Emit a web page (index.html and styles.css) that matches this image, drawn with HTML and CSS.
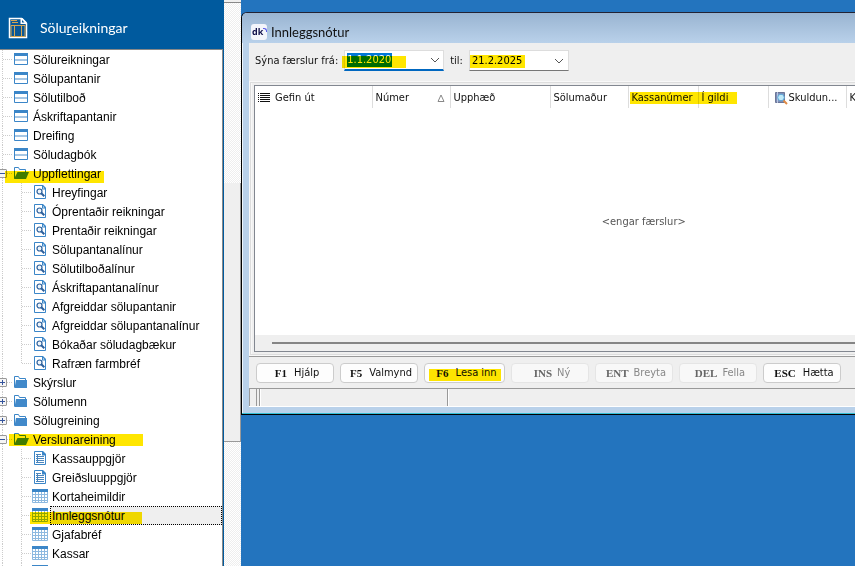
FILE: index.html
```html
<!DOCTYPE html>
<html lang="is">
<head>
<meta charset="utf-8">
<title>Innleggsnótur</title>
<link rel="stylesheet" href="styles.css">
</head>
<body>
<svg class="defs" aria-hidden="true">
  <symbol id="form" viewBox="0 0 16 16"><path fill="#fff" stroke="#3b86c8" d="M1.500 2.500h13v11h-13z"/><path fill="#3b86c8" d="M1 2h14v3H1z"/><path fill="#a5c6e4" d="M2 8h12v2H2z"/></symbol>
  <symbol id="open" viewBox="0 0 16 16"><path fill="#fff" stroke="#3b86c8" d="M1.500 13.500v-11h4l1 2h6v3"/><path fill="#4189ca" d="M4.500 7H16l-3 7H1z"/></symbol>
  <symbol id="folder" viewBox="0 0 16 16"><path fill="#fff" stroke="#3b86c8" d="M1.500 13.500v-11h4l1 2h6v3"/><path fill="#4189ca" d="M3 6h11v8H1.500z"/></symbol>
  <symbol id="lookup" viewBox="0 0 16 16"><path fill="#fff" stroke="#3b86c8" d="M2.500 1.500h8l3 3v10h-11z"/><path fill="#3b86c8" d="M10 1h1l3 3v1.500h-4z"/><path fill="#fff" d="M11 3l1.500 1.500H11z"/><circle cx="7.500" cy="7.500" r="2.500" fill="#eef5fb" stroke="#2b5f9c" stroke-width="1.200"/><path stroke="#2b5f9c" stroke-width="2" d="M9.300 9.300l3 3"/></symbol>
  <symbol id="doc" viewBox="0 0 16 16"><path fill="#fff" stroke="#3b86c8" d="M2.500 1.500h8l3 3v10h-11z"/><path fill="#3b86c8" d="M10 1h1l3 3v1.500h-4z"/><path fill="none" stroke="#4b86bd" d="M4 4.500h5M4 6.500h8M4 8.500h8M4 10.500h8M4 12.500h8M5.500 4v9"/></symbol>
  <symbol id="grid" viewBox="0 0 16 16"><path fill="#fff" stroke="#8db9e0" d="M.5 1.500h15v13H.5z"/><path fill="#3b86c8" d="M0 1h16v3H0z"/><path fill="none" stroke="#8db9e0" d="M3.500 4v10M6.500 4v10M9.500 4v10M12.500 4v10M1 6.500h14M1 9.500h14M1 12.500h14"/></symbol>
  <symbol id="chevron" viewBox="0 0 10 6"><path fill="none" stroke="#555" d="M1 1l4 4 4-4"/></symbol>
</svg>

<aside class="sidebar">
  <header class="module">
    <svg class="module-icon" viewBox="0 0 20 24" aria-hidden="true"><path fill="#0a5795" stroke="#fff" stroke-width="1.500" d="M1.500 2.500h12l5 5v14h-17z"/><path fill="#fff" d="M12.500 2h2l4.500 4.500V8h-6.500z"/><path fill="#0a5795" d="M14 4l2.500 2.500H14z"/><path fill="none" stroke="#d3a552" d="M3 4.500h6M4 6.500h6M3 9.500h14v11H3zM6.500 9v12M13.500 9v12"/></svg>
    <h1>Sölu<u>r</u>eikningar</h1>
  </header>
  <nav class="tree">
    <ul>
      <li><a class="row" href="#"><svg><use href="#form"/></svg><span>Sölureikningar</span></a></li>
      <li><a class="row" href="#"><svg><use href="#form"/></svg><span>Sölupantanir</span></a></li>
      <li><a class="row" href="#"><svg><use href="#form"/></svg><span>Sölutilboð</span></a></li>
      <li><a class="row" href="#"><svg><use href="#form"/></svg><span>Áskriftapantanir</span></a></li>
      <li><a class="row" href="#"><svg><use href="#form"/></svg><span>Dreifing</span></a></li>
      <li><a class="row" href="#"><svg><use href="#form"/></svg><span>Söludagbók</span></a></li>
      <li><a class="row branch expanded marked mark-lookups" href="#"><svg><use href="#open"/></svg><span>Uppflettingar</span></a>
        <ul>
          <li><a class="row" href="#"><svg><use href="#lookup"/></svg><span>Hreyfingar</span></a></li>
          <li><a class="row" href="#"><svg><use href="#lookup"/></svg><span>Óprentaðir reikningar</span></a></li>
          <li><a class="row" href="#"><svg><use href="#lookup"/></svg><span>Prentaðir reikningar</span></a></li>
          <li><a class="row" href="#"><svg><use href="#lookup"/></svg><span>Sölupantanalínur</span></a></li>
          <li><a class="row" href="#"><svg><use href="#lookup"/></svg><span>Sölutilboðalínur</span></a></li>
          <li><a class="row" href="#"><svg><use href="#lookup"/></svg><span>Áskriftapantanalínur</span></a></li>
          <li><a class="row" href="#"><svg><use href="#lookup"/></svg><span>Afgreiddar sölupantanir</span></a></li>
          <li><a class="row" href="#"><svg><use href="#lookup"/></svg><span>Afgreiddar sölupantanalínur</span></a></li>
          <li><a class="row" href="#"><svg><use href="#lookup"/></svg><span>Bókaðar söludagbækur</span></a></li>
          <li><a class="row last" href="#"><svg><use href="#lookup"/></svg><span>Rafræn farmbréf</span></a></li>
        </ul>
      </li>
      <li><a class="row branch" href="#"><svg><use href="#folder"/></svg><span>Skýrslur</span></a></li>
      <li><a class="row branch" href="#"><svg><use href="#folder"/></svg><span>Sölumenn</span></a></li>
      <li><a class="row branch" href="#"><svg><use href="#folder"/></svg><span>Sölugreining</span></a></li>
      <li><a class="row branch expanded marked mark-shop" href="#"><svg><use href="#open"/></svg><span>Verslunareining</span></a>
        <ul>
          <li><a class="row" href="#"><svg><use href="#doc"/></svg><span>Kassauppgjör</span></a></li>
          <li><a class="row" href="#"><svg><use href="#doc"/></svg><span>Greiðsluuppgjör</span></a></li>
          <li><a class="row" href="#"><svg><use href="#grid"/></svg><span>Kortaheimildir</span></a></li>
          <li><a class="row selected marked mark-credit" href="#"><svg><use href="#grid"/></svg><span>Innleggsnótur</span></a></li>
          <li><a class="row" href="#"><svg><use href="#grid"/></svg><span>Gjafabréf</span></a></li>
          <li><a class="row" href="#"><svg><use href="#grid"/></svg><span>Kassar</span></a></li>
          <li><a class="row" href="#"><svg><use href="#grid"/></svg><span></span></a></li>
        </ul>
      </li>
    </ul>
  </nav>
</aside>
<div class="scrollbar"><div class="scroll-cap"></div><div class="scroll-thumb"></div></div>

<main class="desktop">
  <section class="window">
    <header class="titlebar"><span class="logo">dk<i></i></span><h2>Innleggsnótur</h2></header>
    <div class="client">
      <form class="filters">
        <label for="from">Sýna færslur frá:</label>
        <div class="combo focused marked mark-from"><input id="from" type="text" value="1.1.2020"><button type="button" aria-label="Velja"><svg><use href="#chevron"/></svg></button></div>
        <label for="to">til:</label>
        <div class="combo marked mark-to"><input id="to" type="text" value="21.2.2025"><button type="button" aria-label="Velja"><svg><use href="#chevron"/></svg></button></div>
      </form>
      <div class="list-frame">
        <div class="list">
          <table>
            <colgroup><col class="c-menu"><col class="c-issued"><col class="c-num"><col class="c-wide"><col class="c-num"><col class="c-mid"><col class="c-mid"><col class="c-num"><col></colgroup>
            <thead><tr>
              <th class="menu"><svg viewBox="0 0 12 10" aria-hidden="true"><path stroke="#111" d="M0 .5h1M2 .5h10M0 2.500h1M2 2.500h10M0 4.500h1M2 4.500h10M0 6.500h1M2 6.500h10M0 8.500h1M2 8.500h10"/></svg></th>
              <th>Gefin út</th>
              <th><div class="sorted">Númer<svg viewBox="0 0 8 8" aria-hidden="true"><path fill="none" stroke="#888" d="M4 1l3 6.500H1z"/></svg></div></th>
              <th>Upphæð</th>
              <th>Sölumaður</th>
              <th><div class="marked mark-columns">Kassanúmer</div></th>
              <th>Í gildi</th>
              <th><div class="with-icon"><svg viewBox="0 0 14 14" aria-hidden="true"><path fill="#7f8db5" stroke="#6b7697" d="M1.500 1.500h9v10h-9z"/><path fill="#b9c6e0" d="M3 1h1v11H3z"/><circle cx="7" cy="6.500" r="3.300" fill="#bfeaf8" stroke="#5aa5d8"/><path stroke="#e08b45" stroke-width="2" d="M9.500 9.500l3.500 3.500"/></svg>Skuldun...</div></th>
              <th>K</th>
            </tr></thead>
            <tbody><tr><td colspan="9">&lt;engar færslur&gt;</td></tr></tbody>
          </table>
          <div class="hscroll"></div>
        </div>
      </div>
      <div class="actions">
        <button type="button"><b>F1</b>Hjálp</button>
        <button type="button"><b>F5</b>Valmynd</button>
        <button type="button" class="load marked mark-load"><b>F6</b>Lesa inn</button>
        <button type="button" disabled><b>INS</b>Ný</button>
        <button type="button" disabled><b>ENT</b>Breyta</button>
        <button type="button" disabled><b>DEL</b>Fella</button>
        <button type="button"><b>ESC</b>Hætta</button>
      </div>
      <footer class="status"><span class="s-small"></span><span class="s-main"></span><span class="s-rest"></span></footer>
    </div>
  </section>
</main>
</body>
</html>
```
FILE: styles.css
```css
* { box-sizing: border-box; }
body {
  margin: 0;
  height: 100vh;
  display: flex;
  overflow: hidden;
  background: #2374be;
  font: 11px/14px "DejaVu Sans Condensed", Tahoma, sans-serif;
  color: #111;
}
.defs { position: absolute; width: 0; height: 0; }
h1, h2 { margin: 0; font-weight: 400; }
ul { list-style: none; margin: 0; padding: 0; }

/* Highlighter strokes */
.marked { position: relative; }
.marked::after {
  content: "";
  position: absolute;
  background: #ffe600;
  mix-blend-mode: multiply;
  pointer-events: none;
}
.mark-lookups::after { left: 5px; top: 7px; width: 99px; height: 12px; }
.mark-shop::after { left: 9px; top: 4px; width: 134px; height: 12px; }
.mark-credit::after { left: 30px; top: 6px; width: 112px; height: 12px; }
.mark-from::after { left: -3px; top: 5px; width: 64px; height: 12px; }
.mark-to::after { left: 0; top: 4px; width: 55px; height: 13px; }
.mark-columns::after { left: -2px; top: 1px; width: 107px; height: 12px; }
.mark-load::after { left: 4px; top: 5px; width: 72px; height: 12px; }

/* Sidebar */
.sidebar {
  flex: none;
  width: 224px;
  display: flex;
  flex-direction: column;
  background: #fff;
  border-right: 1px solid #005a9e;
}
.module {
  flex: none;
  height: 49px;
  margin-right: -1px;
  padding: 6px 8px 0;
  display: flex;
  align-items: center;
  gap: 12px;
  background: #005a9e;
  color: #fff;
}
.module-icon { width: 20px; height: 24px; }
.module h1 { font: 14px/20px Lato, "Noto Sans", sans-serif; }
.tree {
  flex: 1;
  min-height: 0;
  overflow: hidden;
  border-top: 1px solid #888;
  border-right: 1px solid #888;
  font: 12px/16px "Liberation Sans", Arial, sans-serif;
}
.row {
  display: flex;
  align-items: flex-start;
  gap: 2px;
  height: 19px;
  padding-left: 13px;
  color: #000;
  text-decoration: none;
  background:
    repeating-linear-gradient(#ccc 0 1px, transparent 1px 2px) 2px 0 / 1px 100% no-repeat,
    repeating-linear-gradient(90deg, #ccc 0 1px, transparent 1px 2px) 3px 9px / 9px 1px no-repeat;
}
.row svg { flex: none; width: 16px; height: 16px; margin-top: 1px; }
.row span { flex: 1; height: 19px; padding: 2px 2px 0; white-space: nowrap; }
ul ul .row {
  padding-left: 32px;
  background:
    repeating-linear-gradient(#ccc 0 1px, transparent 1px 2px) 2px 0 / 1px 100% no-repeat,
    repeating-linear-gradient(#ccc 0 1px, transparent 1px 2px) 21px 0 / 1px 100% no-repeat,
    repeating-linear-gradient(90deg, #ccc 0 1px, transparent 1px 2px) 22px 9px / 9px 1px no-repeat;
}
ul ul .row.last { background-size: 1px 100%, 1px 10px, 9px 1px; }
.branch { position: relative; }
.branch::before {
  content: "";
  position: absolute;
  left: -2px;
  top: 5px;
  width: 9px;
  height: 9px;
  box-sizing: border-box;
  border: 1px solid #999;
  border-radius: 1px;
  background:
    linear-gradient(#35549c, #35549c) 50% 50% / 5px 1px no-repeat,
    linear-gradient(#35549c, #35549c) 50% 50% / 1px 5px no-repeat,
    #f5f5f5;
}
.expanded::before { background-size: 5px 1px, 0 0, auto; }
.selected span { background: #efefef; outline: 1px dotted #000; outline-offset: -1px; }

.scrollbar {
  flex: none;
  width: 17px;
  background: repeating-conic-gradient(#eee 0 25%, #fff 0 50%) 0 0 / 2px 2px;
}
.scroll-cap { height: 3px; background: #efefef; border-bottom: 1px solid #888; }
.scroll-thumb {
  height: 259px;
  margin-top: 180px;
  background: #efefef;
  border: 1px solid #999;
  border-width: 0 1px 1px 0;
}

/* Window */
.desktop { flex: 1; min-width: 0; overflow: hidden; padding-top: 12px; }
.window {
  min-width: 800px;
  border: 1px solid #000;
  border-top: 1px solid #223;
  border-radius: 6px 0 0 0;
  background: #b9d1ea;
  box-shadow: inset 0 -1px #35bfd5, inset 1px 0 #eef5fb;
  padding: 0 8px 7px 7px;
}
.titlebar {
  height: 30px;
  margin: 0 -8px 0 -7px;
  padding: 7px 9px 0;
  display: flex;
  align-items: center;
  gap: 4px;
  border-radius: 5px 0 0 0;
  background: linear-gradient(#99b4d1, #b9d1ea);
}
.titlebar h2 { font: 13px/16px Lato, "Noto Sans", sans-serif; }
.logo {
  width: 16px;
  height: 16px;
  padding-left: 1px;
  border-radius: 3px;
  background: #f3f5fb;
  color: #10104a;
  font: bold 9px/15px "Open Sans", sans-serif;
  display: flex;
}
.logo i { width: 4px; height: 4px; margin-top: 4px; border: solid #5b5be8; border-width: 1px 1px 0 0; border-radius: 0 3px 0 0; }
.client { background: #efefef; }
.filters {
  height: 38px;
  padding: 0 6px 3px;
  display: flex;
  align-items: center;
  gap: 6px;
}
.combo {
  display: flex;
  height: 21px;
  width: 100px;
  background: #fff;
  border: 1px solid #ddd;
  border-bottom-color: #777;
}
.combo.focused { border-bottom: 2px solid #0067c0; }
.combo input {
  flex: 1;
  min-width: 0;
  margin: 0;
  padding: 0 0 0 2px;
  border: 0;
  outline: 0;
  background: none;
  font: inherit;
  color: #000;
}
.focused input { color: #fff; background: linear-gradient(#0078d7, #0078d7) 2px 2px / 45px 14px no-repeat; }
.combo button { flex: none; width: 17px; padding: 0; border: 0; background: none; }
.combo button svg { display: block; margin: auto; width: 10px; height: 6px; }
.list-frame { border: solid #f8f8f8; border-width: 2px 0 2px 3px; padding: 2px; outline: 1px solid #ddd; outline-offset: -2px; }
.list { border: 1px solid #828790; background: #fff; }
table { width: 778px; border-collapse: collapse; table-layout: fixed; }
.c-menu { width: 17px; }
.c-issued { width: 100px; }
.c-num { width: 78px; }
.c-wide { width: 100px; }
.c-mid { width: 70px; }
th {
  height: 22px;
  padding: 1px 0 0 3px;
  border-right: 1px solid #ddd;
  text-align: left;
  font-weight: 400;
  white-space: nowrap;
}
th.menu { border: 0; }
.menu svg { display: block; width: 12px; height: 10px; }
.sorted { display: flex; align-items: center; justify-content: space-between; padding-right: 5px; }
.sorted svg { width: 8px; height: 8px; }
.with-icon { display: flex; align-items: center; gap: 1px; padding-left: 2px; }
.with-icon svg { width: 14px; height: 14px; }
td { height: 227px; padding: 0; text-align: center; color: #555; }
.hscroll { height: 16px; padding: 7px 0 0 17px; background: #efefef; }
.hscroll::before { content: ""; display: block; height: 2px; background: #858585; }
.actions {
  height: 32px;
  padding: 0 7px;
  display: flex;
  align-items: center;
  gap: 6px;
  border-top: 1px solid #999;
}
.actions button {
  min-width: 78px;
  height: 20px;
  padding: 0 2px 0 6px;
  display: flex;
  align-items: center;
  justify-content: center;
  gap: 7px;
  border: 1px solid #ccc;
  border-radius: 4px;
  background: #fdfdfd;
  font: inherit;
  color: #111;
}
.actions .load { min-width: 81px; }
.actions b { font: bold 11px/14px "Liberation Serif", serif; }
.actions button:disabled { gap: 5px; color: #888; background: #f8f8f8; border-color: #e5e5e5; }
.actions button:disabled b { color: #666; }
.status { height: 19px; display: flex; gap: 2px; border-top: 1px solid #999; border-bottom: 1px solid #fff; }
.status span { border-left: 1px solid #999; }
.s-small { width: 8px; border-right: 1px solid #999; }
.s-main { width: 186px; }
.s-main, .s-rest { box-shadow: inset 1px 0 #fff; }
.s-rest { flex: 1; }
```
